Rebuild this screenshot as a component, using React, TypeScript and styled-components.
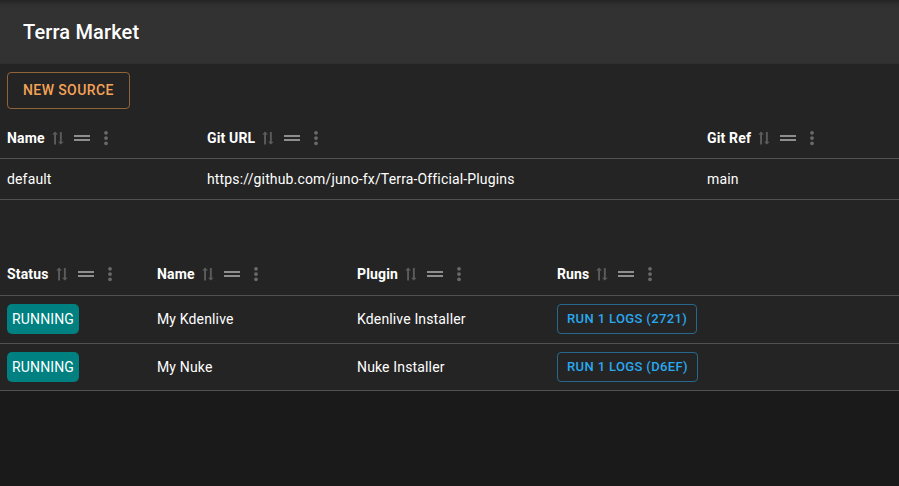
import React from "react";
import styled, { createGlobalStyle } from "styled-components";

const GlobalStyle = createGlobalStyle`
  *, *::before, *::after { box-sizing: border-box; }
  body {
    margin: 0;
    background: #1a1a1a;
    color: #ffffff;
    font-family: Roboto, "Liberation Sans", sans-serif;
    font-size: 14px;
    overflow-x: hidden;
  }
`;

const Header = styled.header`
  height: 64px;
  padding: 0 23px;
  display: flex;
  align-items: center;
  background: linear-gradient(#242424, #303030 5px, #323232 9px);
`;

const Title = styled.h1`
  margin: 0;
  font-size: 20px;
  line-height: 32px;
  font-weight: 500;
  letter-spacing: 0.0075em;
`;

const Panel = styled.main`
  background: #242424;
  box-shadow: 0 1px 2px #101010;
`;

const Toolbar = styled.div`
  padding: 8px 7px 9px;
  display: flex;
`;

const OutlinedButton = styled.button<{ $small?: boolean }>`
  display: block;
  height: ${(p) => (p.$small ? 30 : 37)}px;
  padding: ${(p) => (p.$small ? "0 9px" : "0 15px 1px")};
  border: 1px solid ${(p) => (p.$small ? "#26698c" : "#916339")};
  border-radius: 4px;
  background: transparent;
  color: ${(p) => (p.$small ? "#29a9f0" : "#f4a258")};
  font-family: inherit;
  font-size: ${(p) => (p.$small ? 13 : 14)}px;
  line-height: 22px;
  font-weight: 500;
  letter-spacing: 0.02857em;
  text-transform: uppercase;
  white-space: nowrap;
  cursor: pointer;
`;

const Table = styled.table<{ $headHeight: number }>`
  width: 100%;
  table-layout: fixed;
  border-collapse: separate;
  border-spacing: 0;

  & th {
    height: ${(p) => p.$headHeight}px;
  }
  & + & {
    margin-top: 53px;
  }
`;

const HeadCell = styled.th<{ $width?: number }>`
  width: ${(p) => (p.$width ? `${p.$width}px` : "auto")};
  padding: 0 7px;
  border-bottom: 1px solid #515151;
  text-align: left;
  font-weight: 700;
  line-height: 22px;
  letter-spacing: 0.01071em;
`;

const HeadContent = styled.div`
  display: flex;
  align-items: center;
  white-space: nowrap;
`;

const IconButton = styled.button<{ $kind: "sort" | "drag" | "menu" }>`
  display: flex;
  margin: 0 0 0 ${(p) => ({ sort: 4, drag: 3, menu: 3 })[p.$kind]}px;
  padding: 0;
  border: 0;
  background: transparent;
  color: ${(p) => ({ sort: "#5c5c5c", drag: "#8e8e8e", menu: "#6a6a6a" })[p.$kind]};
  cursor: pointer;
`;

const Cell = styled.td`
  height: 41px;
  padding: 0 7px;
  border-bottom: 1px solid #515151;
  line-height: 20px;
  letter-spacing: 0.01071em;
  white-space: nowrap;
`;

const TallRow = styled.tr`
  & > td {
    height: 48px;
    padding-bottom: 1px;
  }
  &:last-child > td {
    height: 47px;
    padding-bottom: 0;
  }
`;

const StatusBadge = styled.span`
  display: inline-block;
  padding: 5px;
  border-radius: 5px;
  background: #008080;
  line-height: 20px;
  vertical-align: middle;
`;

const SortIcon = () => (
  <svg width="18" height="18" viewBox="0 0 18 18" fill="currentColor" aria-hidden="true">
    <path d="M6.1 2.6 9 5.4H7V15.6H5.1V5.4H3.2ZM10.9 3H12.8V12.8H14.7L11.8 15.6 9 12.8H10.9Z" />
  </svg>
);

const DragIcon = () => (
  <svg width="24" height="24" viewBox="0 0 24 24" fill="currentColor" aria-hidden="true">
    <path d="M4 9H20V11H4ZM4 13H20V15H4Z" />
  </svg>
);

const MenuIcon = () => (
  <svg width="18" height="18" viewBox="0 0 24 24" fill="currentColor" aria-hidden="true">
    <circle cx="12" cy="5" r="2.5" />
    <circle cx="12" cy="12" r="2.5" />
    <circle cx="12" cy="19" r="2.5" />
  </svg>
);

function ColumnHead({ label, width }: { label: string; width?: number }) {
  return (
    <HeadCell scope="col" $width={width}>
      <HeadContent>
        <span>{label}</span>
        <IconButton $kind="sort" type="button" aria-label={`Sort by ${label}`}>
          <SortIcon />
        </IconButton>
        <IconButton $kind="drag" type="button" aria-label={`Move ${label}`}>
          <DragIcon />
        </IconButton>
        <IconButton $kind="menu" type="button" aria-label={`${label} column actions`}>
          <MenuIcon />
        </IconButton>
      </HeadContent>
    </HeadCell>
  );
}

const sources = [
  { name: "default", url: "https://github.com/juno-fx/Terra-Official-Plugins", gitRef: "main" },
];

const installs = [
  { status: "RUNNING", name: "My Kdenlive", plugin: "Kdenlive Installer", run: "Run 1 Logs (2721)" },
  { status: "RUNNING", name: "My Nuke", plugin: "Nuke Installer", run: "Run 1 Logs (D6EF)" },
];

export default function App() {
  return (
    <>
      <GlobalStyle />
      <Header>
        <Title>Terra Market</Title>
      </Header>
      <Panel>
        <Toolbar>
          <OutlinedButton type="button">New Source</OutlinedButton>
        </Toolbar>
        <Table $headHeight={41}>
          <thead>
            <tr>
              <ColumnHead label="Name" width={200} />
              <ColumnHead label="Git URL" width={500} />
              <ColumnHead label="Git Ref" />
            </tr>
          </thead>
          <tbody>
            {sources.map((s) => (
              <tr key={s.name}>
                <Cell>{s.name}</Cell>
                <Cell>{s.url}</Cell>
                <Cell>{s.gitRef}</Cell>
              </tr>
            ))}
          </tbody>
        </Table>
        <Table $headHeight={43}>
          <thead>
            <tr>
              <ColumnHead label="Status" width={150} />
              <ColumnHead label="Name" width={200} />
              <ColumnHead label="Plugin" width={200} />
              <ColumnHead label="Runs" />
            </tr>
          </thead>
          <tbody>
            {installs.map((i) => (
              <TallRow key={i.name}>
                <Cell>
                  <StatusBadge>{i.status}</StatusBadge>
                </Cell>
                <Cell>{i.name}</Cell>
                <Cell>{i.plugin}</Cell>
                <Cell>
                  <OutlinedButton $small type="button">
                    {i.run}
                  </OutlinedButton>
                </Cell>
              </TallRow>
            ))}
          </tbody>
        </Table>
      </Panel>
    </>
  );
}
